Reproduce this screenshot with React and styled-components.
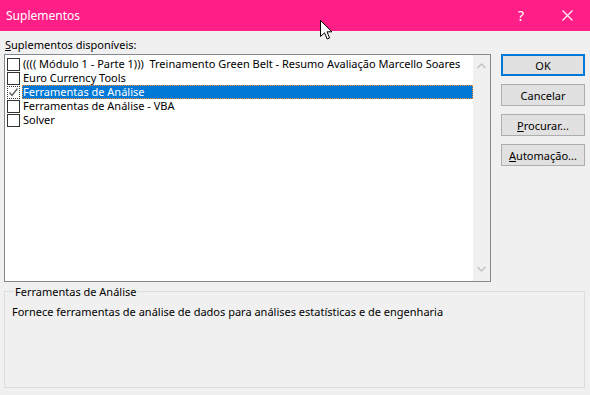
import React from "react"
import styled, { createGlobalStyle } from "styled-components"

const GlobalStyle = createGlobalStyle`
  html, body {
    margin: 0;
    padding: 0;
    background: #f0f0f0;
  }
  body {
    font-family: "Noto Sans", "Open Sans", sans-serif;
    font-size: 11px;
    color: #000;
  }
`

const items = [
  { label: "(((( Módulo 1 - Parte 1)))  Treinamento Green Belt - Resumo Avaliação Marcello Soares", checked: false },
  { label: "Euro Currency Tools", checked: false },
  { label: "Ferramentas de Análise", checked: true, selected: true },
  { label: "Ferramentas de Análise - VBA", checked: false },
  { label: "Solver", checked: false },
]

const App = () => {
  return (
    <Window>
      <GlobalStyle />
      <TitleBar>
        <Title>Suplementos</Title>
        <Caption>
          <CaptionButton>?</CaptionButton>
          <CaptionButton>
            <svg width="11" height="11" viewBox="0 0 11 11">
              <path d="M0.5 0.5 L10.5 10.5 M10.5 0.5 L0.5 10.5" stroke="#fff" strokeWidth="1.1" />
            </svg>
          </CaptionButton>
        </Caption>
        <Cursor width="13" height="20" viewBox="0 0 13 20">
          <path
            d="M0.5 0.5 L0.5 16.5 L4.5 12.8 L7.2 19 L9.6 18 L7 11.8 L12 11.8 Z"
            fill="#fff"
            stroke="#000"
            strokeWidth="1"
          />
        </Cursor>
      </TitleBar>
      <Body>
        <Main>
          <ListColumn>
            <FieldLabel>
              <u>S</u>uplementos disponíveis:
            </FieldLabel>
            <ListBox>
              <Rows>
                {items.map((it) => (
                  <Row key={it.label}>
                    <Check $focus={it.selected}>
                      {it.checked && (
                        <svg width="11" height="11" viewBox="0 0 11 11">
                          <path d="M1.5 5.5 L4 8.5 L9.5 1.5" fill="none" stroke="#5a5a5a" strokeWidth="1.3" />
                        </svg>
                      )}
                    </Check>
                    <RowText $selected={it.selected}>{it.label}</RowText>
                  </Row>
                ))}
              </Rows>
              <ScrollBar>
                <svg width="9" height="6" viewBox="0 0 9 6">
                  <path d="M0.5 5 L4.5 1 L8.5 5" fill="none" stroke="#c2c2c2" strokeWidth="1.4" />
                </svg>
                <svg width="9" height="6" viewBox="0 0 9 6">
                  <path d="M0.5 1 L4.5 5 L8.5 1" fill="none" stroke="#c2c2c2" strokeWidth="1.4" />
                </svg>
              </ScrollBar>
            </ListBox>
          </ListColumn>
          <Buttons>
            <Button $default>OK</Button>
            <Button>Cancelar</Button>
            <Button>
              <u>P</u>rocurar...
            </Button>
            <Button>
              <u>A</u>utomação...
            </Button>
          </Buttons>
        </Main>
        <Group>
          <Legend>Ferramentas de Análise</Legend>
          <Description>
            Fornece ferramentas de análise de dados para análises estatísticas e de engenharia
          </Description>
        </Group>
      </Body>
    </Window>
  )
}

export default App

const Window = styled.div`
  width: 590px;
  height: 395px;
  background: #f0f0f0;
  display: flex;
  flex-direction: column;
  overflow: hidden;
`

const TitleBar = styled.div`
  position: relative;
  height: 31px;
  flex: none;
  background: #ff1f87;
  display: flex;
  align-items: center;
  justify-content: space-between;
  color: #fff;
`

const Title = styled.div`
  padding-left: 6px;
  font-size: 12px;
  padding-bottom: 1px;
`

const Caption = styled.div`
  display: flex;
  height: 100%;
`

const CaptionButton = styled.div`
  width: 46px;
  height: 100%;
  display: flex;
  align-items: center;
  justify-content: center;
  font-size: 14px;
  color: #fff;
`

const Cursor = styled.svg`
  position: absolute;
  left: 320px;
  top: 20px;
  z-index: 5;
`

const Body = styled.div`
  flex: 1;
  display: flex;
  flex-direction: column;
  padding: 6px 5px 7px 4px;
  gap: 2px;
`

const Main = styled.div`
  display: flex;
  gap: 10px;
`

const ListColumn = styled.div`
  width: 487px;
  display: flex;
  flex-direction: column;
`

const FieldLabel = styled.div`
  height: 17px;
  line-height: 16px;
  padding-left: 1px;
`

const ListBox = styled.div`
  height: 226px;
  border: 1px solid #828790;
  background: #fff;
  display: flex;
`

const Rows = styled.div`
  flex: 1;
  min-width: 0;
  overflow: hidden;
  padding-top: 2px;
  display: flex;
  flex-direction: column;
`

const Row = styled.div`
  height: 14px;
  display: flex;
  align-items: center;
  padding-left: 2px;
`

const Check = styled.div`
  width: 11px;
  height: 11px;
  border: 1px solid ${(p) => (p.$focus ? "transparent" : "#333")};
  outline: ${(p) => (p.$focus ? "1px dotted #333" : "none")};
  outline-offset: -1px;
  background: #fff;
  display: flex;
  align-items: center;
  justify-content: center;
  flex: none;
`

const RowText = styled.div`
  margin-left: 2px;
  height: 14px;
  line-height: 14px;
  padding: 0 1px;
  white-space: pre;
  flex: ${(p) => (p.$selected ? 1 : "none")};
  background: ${(p) => (p.$selected ? "#0078d7" : "transparent")};
  color: ${(p) => (p.$selected ? "#fff" : "#000")};
  outline: ${(p) => (p.$selected ? "1px dotted #ff8c28" : "none")};
  outline-offset: -1px;
`

const ScrollBar = styled.div`
  width: 17px;
  flex: none;
  background: #f0f0f0;
  display: flex;
  flex-direction: column;
  align-items: center;
  justify-content: space-between;
  padding: 8px 0 9px;
`

const Buttons = styled.div`
  width: 84px;
  padding-top: 17px;
  display: flex;
  flex-direction: column;
  gap: 8px;
`

const Button = styled.div`
  height: 22px;
  box-sizing: border-box;
  border: ${(p) => (p.$default ? "2px solid #0078d7" : "1px solid #adadad")};
  background: #e1e1e1;
  display: flex;
  align-items: center;
  justify-content: center;
  font-size: 11px;
`

const Group = styled.fieldset`
  margin: 0;
  flex: 1;
  border: 1px solid #dcdcdc;
  padding: 3px 7px;
  min-width: 0;
`

const Legend = styled.legend`
  padding: 0 1px;
  margin-left: 2px;
  font-size: 11px;
`

const Description = styled.div`
  padding-top: 2px;
  font-size: 11px;
`
